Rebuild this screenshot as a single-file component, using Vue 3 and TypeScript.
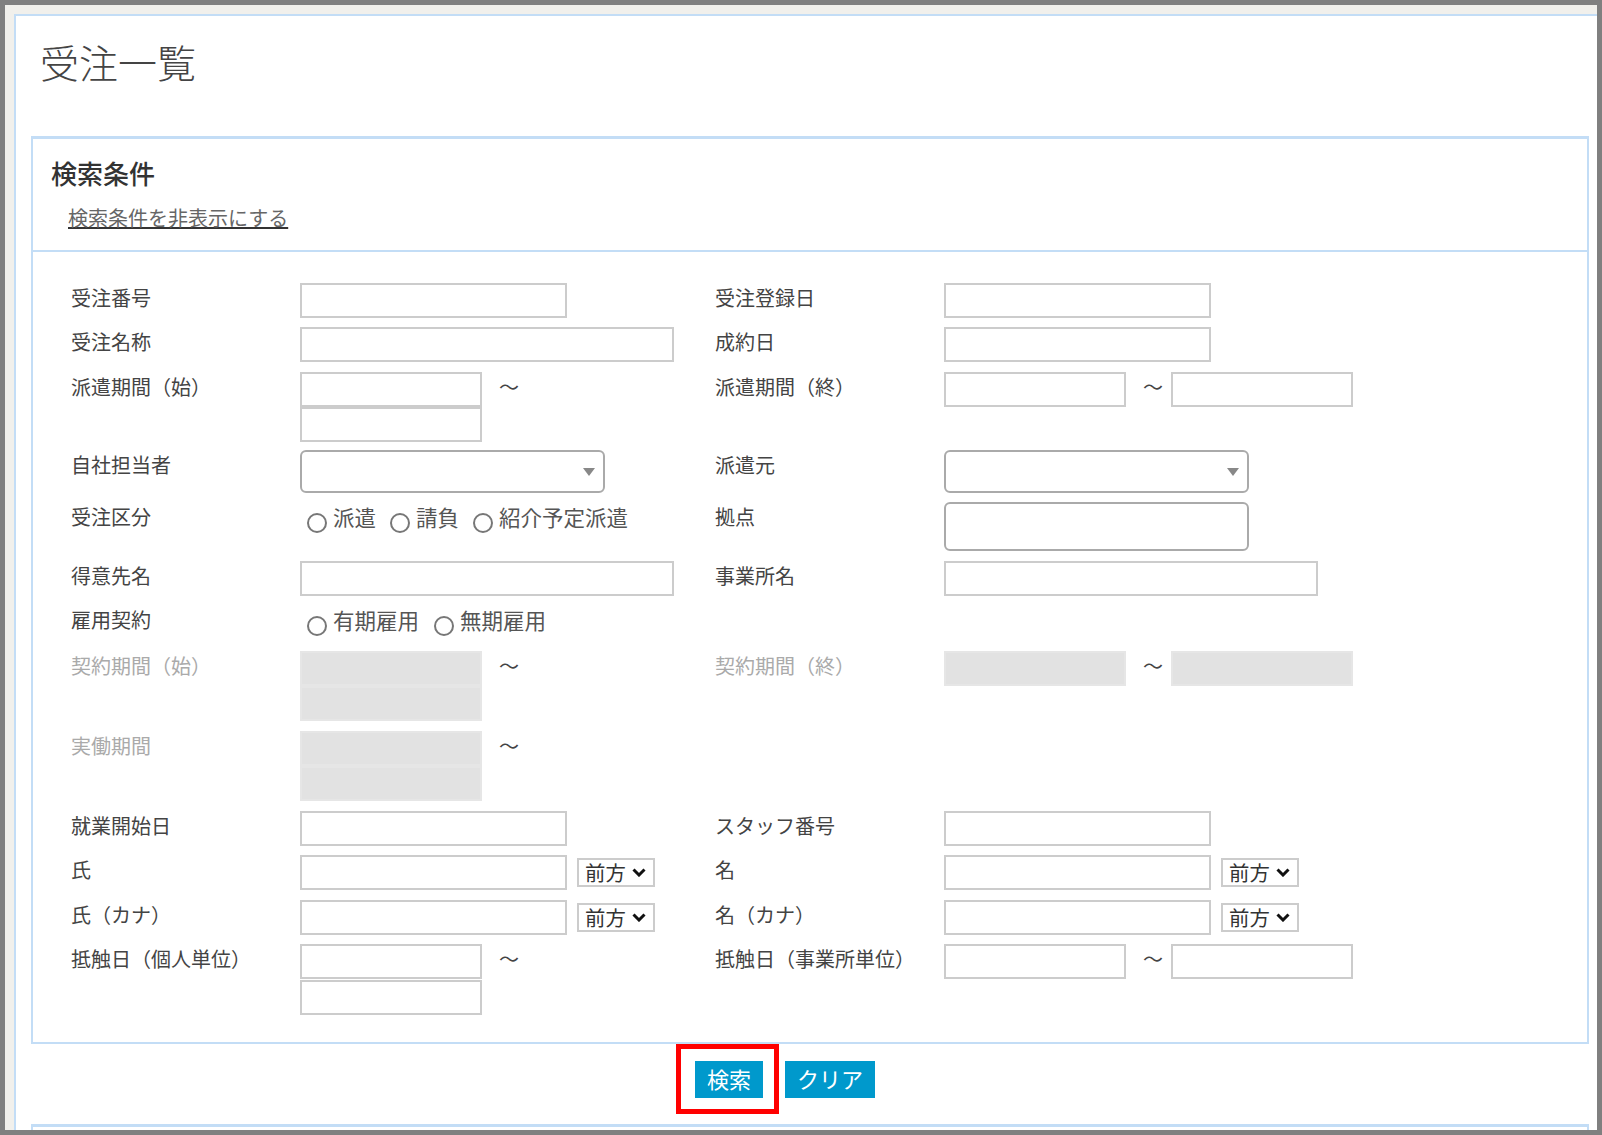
<script setup lang="ts">
defineOptions({ name: 'OrderSearch' })
</script>

<template>
  <div class="frame">
    <main class="content">
      <h1 class="page-title">受注一覧</h1>

      <section class="panel">
        <header class="panel-head">
          <h2 class="panel-title">検索条件</h2>
          <a class="toggle-link" href="#">検索条件を非表示にする</a>
        </header>

        <div class="form">
          <label class="label">受注番号</label>
          <div class="field"><input class="input md" type="text" /></div>
          <label class="label">受注登録日</label>
          <div class="field"><input class="input md" type="text" /></div>

          <label class="label">受注名称</label>
          <div class="field"><input class="input lg" type="text" /></div>
          <label class="label">成約日</label>
          <div class="field"><input class="input md" type="text" /></div>

          <label class="label">派遣期間（始）</label>
          <div class="range stacked">
            <input class="input sm" type="text" />
            <span class="tilde">～</span>
            <input class="input sm" type="text" />
          </div>
          <label class="label">派遣期間（終）</label>
          <div class="range">
            <input class="input sm" type="text" />
            <span class="tilde">～</span>
            <input class="input sm" type="text" />
          </div>

          <label class="label tight">自社担当者</label>
          <div class="field tight"><div class="combo"></div></div>
          <label class="label tight">派遣元</label>
          <div class="field tight"><div class="combo"></div></div>

          <label class="label">受注区分</label>
          <div class="radios">
            <label class="radio"><input type="radio" name="kind" /><span>派遣</span></label>
            <label class="radio"><input type="radio" name="kind" /><span>請負</span></label>
            <label class="radio"><input type="radio" name="kind" /><span>紹介予定派遣</span></label>
          </div>
          <label class="label">拠点</label>
          <div class="field"><div class="multi"></div></div>

          <label class="label">得意先名</label>
          <div class="field"><input class="input lg" type="text" /></div>
          <label class="label">事業所名</label>
          <div class="field"><input class="input lg" type="text" /></div>

          <label class="label">雇用契約</label>
          <div class="radios contract">
            <label class="radio"><input type="radio" name="contract" /><span>有期雇用</span></label>
            <label class="radio"><input type="radio" name="contract" /><span>無期雇用</span></label>
          </div>
          <div></div>
          <div></div>

          <label class="label off">契約期間（始）</label>
          <div class="range stacked">
            <input class="input sm" type="text" disabled />
            <span class="tilde">～</span>
            <input class="input sm" type="text" disabled />
          </div>
          <label class="label off">契約期間（終）</label>
          <div class="range">
            <input class="input sm" type="text" disabled />
            <span class="tilde">～</span>
            <input class="input sm" type="text" disabled />
          </div>

          <label class="label off">実働期間</label>
          <div class="range stacked">
            <input class="input sm" type="text" disabled />
            <span class="tilde">～</span>
            <input class="input sm" type="text" disabled />
          </div>
          <div></div>
          <div></div>

          <label class="label">就業開始日</label>
          <div class="field"><input class="input md" type="text" /></div>
          <label class="label">スタッフ番号</label>
          <div class="field"><input class="input md" type="text" /></div>

          <label class="label">氏</label>
          <div class="field with-match">
            <input class="input md" type="text" />
            <select class="match"><option>前方</option></select>
          </div>
          <label class="label">名</label>
          <div class="field with-match">
            <input class="input md" type="text" />
            <select class="match"><option>前方</option></select>
          </div>

          <label class="label">氏（カナ）</label>
          <div class="field with-match">
            <input class="input md" type="text" />
            <select class="match"><option>前方</option></select>
          </div>
          <label class="label">名（カナ）</label>
          <div class="field with-match">
            <input class="input md" type="text" />
            <select class="match"><option>前方</option></select>
          </div>

          <label class="label">抵触日（個人単位）</label>
          <div class="range stacked">
            <input class="input sm" type="text" />
            <span class="tilde">～</span>
            <input class="input sm" type="text" />
          </div>
          <label class="label">抵触日（事業所単位）</label>
          <div class="range">
            <input class="input sm" type="text" />
            <span class="tilde">～</span>
            <input class="input sm" type="text" />
          </div>
        </div>
      </section>

      <div class="actions">
        <span class="marked"><button class="btn" type="button">検索</button></span>
        <button class="btn" type="button">クリア</button>
      </div>

      <section class="panel next"></section>
    </main>
  </div>
</template>

<style>
html,
body {
  margin: 0;
  background: #fff;
}
</style>

<style scoped>
.frame {
  box-sizing: border-box;
  width: 1602px;
  height: 1135px;
  border: 5px solid #808080;
  background: #f1f0ec;
  padding: 9px 0 0 9px;
  overflow: hidden;
  font-family: "Noto Sans CJK JP", "Noto Sans", sans-serif;
  color: #444;
}

.content {
  box-sizing: border-box;
  height: 1200px;
  background: #fff;
  border-top: 2px solid #c3ddf6;
  border-left: 2px solid #c3ddf6;
  padding: 0 8px 0 15px;
}

.page-title {
  margin: 0;
  height: 120px;
  padding: 17px 0 0 9px;
  box-sizing: border-box;
  font-size: 39px;
  line-height: 56px;
  font-weight: 300;
  color: #444;
}

.panel {
  border: 2px solid #c3ddf6;
  border-top-width: 3px;
}

.panel-head {
  height: 113px;
  box-sizing: border-box;
  padding: 15px 0 0 18px;
  border-bottom: 2px solid #c3ddf6;
}

.panel-title {
  margin: 0;
  font-size: 26px;
  line-height: 38px;
  font-weight: 500;
  color: #333;
}

.toggle-link {
  display: inline-block;
  margin: 13px 0 0 17px;
  font-size: 20px;
  line-height: 26px;
  color: #666;
  text-decoration: underline;
  text-decoration-color: #333;
}

.form {
  display: grid;
  grid-template-columns: 229px 415px 229px 1fr;
  row-gap: 9.5px;
  padding: 30.5px 0 27.5px 38px;
}

.label {
  font-size: 20px;
  line-height: 30px;
  color: #444;
  white-space: nowrap;
}

.label.off {
  color: #aaa;
}

.tight {
  margin-top: -2px;
}

.field {
  display: flex;
  align-items: flex-start;
}

.with-match {
  align-items: center;
  gap: 10px;
}

.input {
  box-sizing: border-box;
  display: block;
  height: 35px;
  margin: 0;
  padding: 0 6px;
  border: 2px solid #ccc;
  border-radius: 0;
  background: #fff;
  outline: none;
}

.input:disabled {
  background: #e2e2e2;
  border-color: #e6e6e6;
}

.sm {
  width: 181.5px;
}

.md {
  width: 267px;
}

.lg {
  width: 374px;
}

.range {
  display: flex;
  align-items: flex-start;
}

.range.stacked {
  display: grid;
  grid-template-columns: 181.5px auto;
  justify-content: start;
  row-gap: 0.5px;
}

.tilde {
  width: 28px;
  padding-left: 17.5px;
  font-size: 20px;
  line-height: 30px;
  color: #444;
}

.combo,
.multi {
  box-sizing: border-box;
  width: 305px;
  border: 2px solid #aaa;
  border-radius: 6px;
  background: #fff;
}

.combo {
  position: relative;
  height: 43px;
}

.combo::after {
  content: "";
  position: absolute;
  right: 8px;
  top: 16px;
  border-style: solid;
  border-width: 8px 6px 0;
  border-color: #888 transparent transparent;
}

.multi {
  height: 49px;
}

.radios {
  display: flex;
  align-items: flex-start;
  gap: 14px;
  padding-left: 7px;
}

.radios.contract {
  height: 36px;
  gap: 15px;
}

.radio {
  display: flex;
  align-items: flex-start;
  gap: 6px;
  font-size: 21.5px;
  line-height: 29px;
  color: #555;
}

.radio input {
  appearance: none;
  box-sizing: border-box;
  width: 20px;
  height: 20px;
  margin: 11px 0 0;
  border: 2px solid #777;
  border-radius: 50%;
  background: #fff;
}

.match {
  appearance: none;
  box-sizing: border-box;
  width: 78px;
  height: 29px;
  padding: 0 0 0 6px;
  border: 2px solid #ccc;
  border-radius: 0;
  background: #fff url("data:image/svg+xml,%3Csvg xmlns='http://www.w3.org/2000/svg' width='14' height='9' viewBox='0 0 14 9'%3E%3Cpath d='M1.5 1.5 7 7l5.5-5.5' fill='none' stroke='%23111' stroke-width='3'/%3E%3C/svg%3E") no-repeat right 7px center;
  font-family: inherit;
  font-size: 20.4px;
  line-height: 25px;
  color: #333;
}

.actions {
  display: flex;
  align-items: flex-start;
  gap: 22px;
  height: 80px;
  box-sizing: border-box;
  padding: 17px 0 0 664px;
}

.btn {
  box-sizing: border-box;
  height: 37px;
  padding: 0 12px 3px;
  border: 0;
  background: #0099cc;
  color: #fff;
  font-family: inherit;
  font-size: 22px;
  line-height: 34px;
}

.marked {
  position: relative;
  display: block;
}

/* red annotation drawn over the screenshot */
.marked::after {
  content: "";
  position: absolute;
  inset: -17px -16px -16px -19px;
  border: 5px solid #f00;
  pointer-events: none;
}

.next {
  height: 120px;
}
</style>
